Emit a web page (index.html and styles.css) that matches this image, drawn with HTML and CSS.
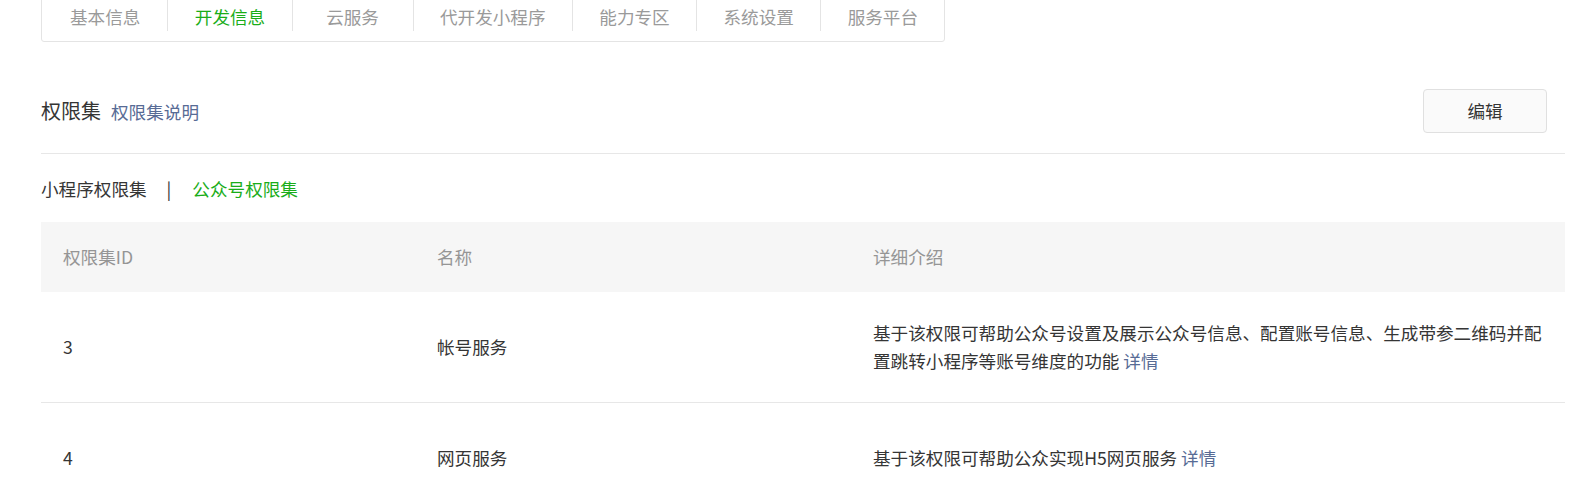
FILE: index.html
```html
<!DOCTYPE html>
<html lang="zh-CN">
<head>
<meta charset="utf-8">
<title>开发信息</title>
<link rel="stylesheet" href="styles.css">
</head>
<body>
<div class="page">
  <nav class="tabs">
    <a class="tab">基本信息</a>
    <a class="tab active">开发信息</a>
    <a class="tab">云服务</a>
    <a class="tab">代开发小程序</a>
    <a class="tab">能力专区</a>
    <a class="tab">系统设置</a>
    <a class="tab">服务平台</a>
  </nav>

  <div class="section-head">
    <div class="section-title">
      <h2 class="title">权限集</h2>
      <a class="link title-link">权限集说明</a>
    </div>
    <button class="btn">编辑</button>
  </div>

  <div class="subtabs">
    <span class="subtab">小程序权限集</span>
    <span class="subtab-sep">|</span>
    <span class="subtab active">公众号权限集</span>
  </div>

  <div class="table">
    <div class="row head">
      <div class="cell">权限集ID</div>
      <div class="cell">名称</div>
      <div class="cell">详细介绍</div>
    </div>
    <div class="row">
      <div class="cell">3</div>
      <div class="cell">帐号服务</div>
      <div class="cell"><span>基于该权限可帮助公众号设置及展示公众号信息、配置账号信息、生成带参二维码并配置跳转小程序等账号维度的功能</span> <a class="link">详情</a></div>
    </div>
    <div class="row">
      <div class="cell">4</div>
      <div class="cell">网页服务</div>
      <div class="cell"><span>基于该权限可帮助公众实现H5网页服务</span> <a class="link">详情</a></div>
    </div>
  </div>
</div>
</body>
</html>
```

FILE: styles.css
```css
* {
  box-sizing: border-box;
}

html, body {
  margin: 0;
  padding: 0;
  background: #ffffff;
}

body {
  font-family: "Noto Sans CJK SC", "Noto Sans", sans-serif;
  font-size: 17.6px;
  color: #353535;
  overflow: hidden;
}

.page {
  margin: 0 6px 0 41px;
}

/* top tab bar */
.tabs {
  display: inline-flex;
  margin-top: -12px;
  border: 1px solid #e4e4e4;
  border-radius: 3px;
  padding-bottom: 10px;
}

.tab {
  display: block;
  flex: none;
  min-width: 121px;
  height: 42px;
  padding: 14px 26.4px 0;
  line-height: 28px;
  text-align: center;
  color: #9a9a9a;
  white-space: nowrap;
  border-left: 1px solid #e4e4e4;
}

.tab:first-child {
  border-left: none;
  padding-left: 28px;
  padding-right: 27px;
}

.tab.active {
  color: #1aad19;
}

/* section header */
.section-head {
  display: flex;
  align-items: center;
  justify-content: space-between;
  margin-top: 47px;
  padding-bottom: 20px;
  border-bottom: 1px solid #e7e7e7;
}

.section-title {
  display: flex;
  align-items: baseline;
}

.title {
  margin: 0;
  font-size: 20px;
  font-weight: normal;
  line-height: 30px;
  color: #353535;
}

.link {
  color: #576b95;
  text-decoration: none;
}

.title-link {
  margin-left: 10px;
}

.btn {
  width: 124px;
  height: 44px;
  margin-right: 18px;
  border: 1px solid #e0e0e0;
  border-radius: 4px;
  background: #fafafa;
  font-family: inherit;
  font-size: 17.6px;
  color: #353535;
  line-height: 1;
  padding: 0;
}

/* sub tabs */
.subtabs {
  display: flex;
  align-items: center;
  padding-top: 21px;
  line-height: 28px;
}

.subtab {
  color: #353535;
}

.subtab.active {
  color: #1aad19;
}

.subtab-sep {
  margin: 0 21px 0 20px;
  color: #353535;
}

/* table */
.table {
  margin-top: 19px;
}

.row {
  display: grid;
  grid-template-columns: 374px 436px 1fr;
  align-items: center;
  height: 111px;
  border-bottom: 1px solid #e7e7e7;
  line-height: 28px;
}

.row.head {
  height: 70px;
  background: #f6f6f6;
  border-bottom: none;
  color: #959595;
}

.cell {
  padding: 0 22px;
}
```
